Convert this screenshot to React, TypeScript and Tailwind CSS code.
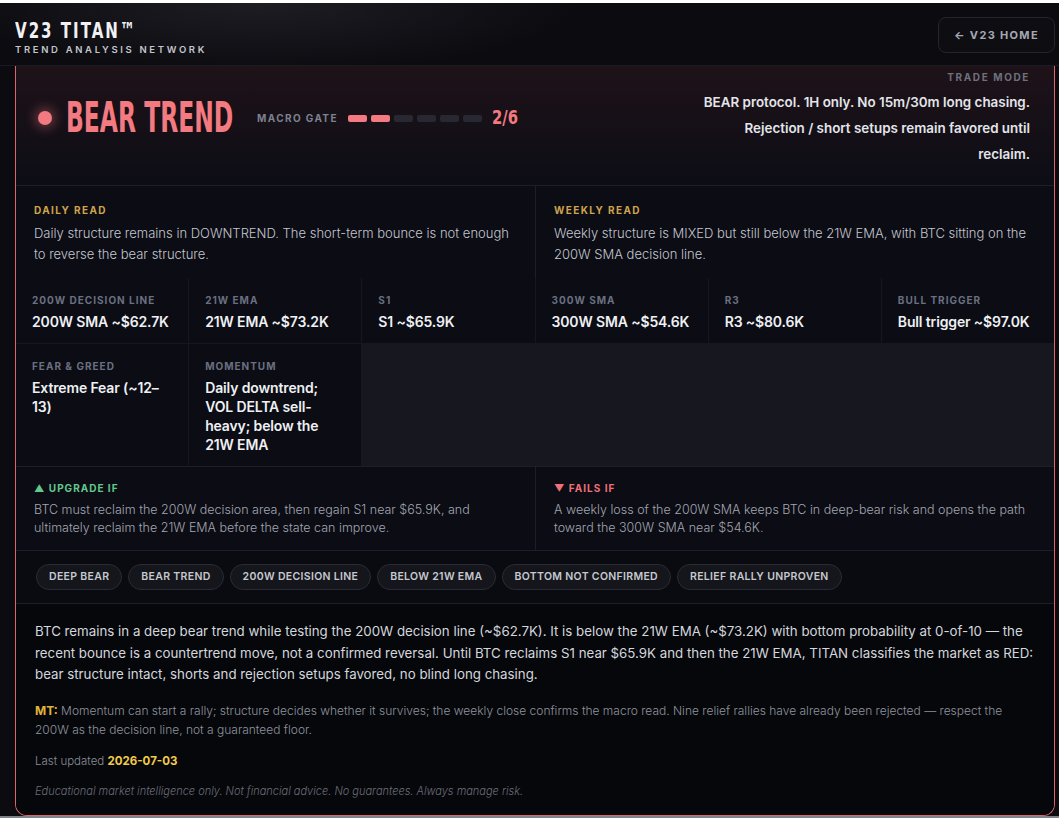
const metrics = [
  { label: "200W DECISION LINE", value: "200W SMA ~$62.7K" },
  { label: "21W EMA", value: "21W EMA ~$73.2K" },
  { label: "S1", value: "S1 ~$65.9K" },
  { label: "300W SMA", value: "300W SMA ~$54.6K" },
  { label: "R3", value: "R3 ~$80.6K" },
  { label: "BULL TRIGGER", value: "Bull trigger ~$97.0K" },
  { label: "FEAR & GREED", value: "Extreme Fear (~12–13)" },
  { label: "MOMENTUM", value: "Daily downtrend; VOL DELTA sell-heavy; below the 21W EMA" },
];

const tags = [
  "DEEP BEAR",
  "BEAR TREND",
  "200W DECISION LINE",
  "BELOW 21W EMA",
  "BOTTOM NOT CONFIRMED",
  "RELIEF RALLY UNPROVEN",
];

const cond = "font-['Liberation_Sans_Narrow','DejaVu_Sans_Condensed',sans-serif]";

const App = (): JSX.Element => {
  return (
    <div className="h-[818px] w-[1059px] overflow-hidden bg-[#0b0b10] font-['Inter',sans-serif]">
      <div className="h-[3px] bg-white" />

      {/* top bar */}
      <header className="flex h-[63px] items-start justify-between border-b border-[#1a1b22] bg-[radial-gradient(ellipse_320px_70px_at_260px_0px,#1d1d23,#0b0b10)] pl-[15px] pr-[4px]">
        <div className="pt-[17px]">
          <div className="w-[120px]">
            <span className={`inline-block origin-left [transform:scaleX(0.76)] whitespace-nowrap text-[22px] font-bold leading-[20px] tracking-[0.12em] text-[#f1f1f4] ${cond}`}>
              V23 TITAN™
            </span>
          </div>
          <div className="text-[9.5px] font-semibold leading-[12px] tracking-[0.28em] text-[#c4c6cd]">
            TREND ANALYSIS NETWORK
          </div>
        </div>
        <button className="mt-[14px] h-[36px] w-[117px] rounded-lg border border-[#24252d] bg-[#0d0d12] text-[11px] font-bold tracking-[0.12em] text-[#a6a9b3]">
          ← V23 HOME
        </button>
      </header>

      <div className="ml-[15px] mr-[4px] overflow-hidden rounded-b-[12px] border-x border-b border-[#dc6470] bg-[#0b0c14]">
        {/* hero */}
        <div className="flex justify-between border-b border-[#1d1f28] bg-linear-to-b from-[#1f1219] to-[#0c0d15]">
          <div className="box-content flex h-[42px] items-center pl-[22px] pt-[31px]">
            <span className="h-[14px] w-[14px] rounded-full bg-[#f37a80] shadow-[0_0_12px_3px_rgba(243,122,128,0.4)]" />
            <div className="ml-[14px] w-[168px]">
              <span className={`inline-block origin-left [transform:scaleX(0.62)] whitespace-nowrap text-[42px] font-bold leading-[42px] text-[#f37a80] ${cond}`}>
                BEAR TREND
              </span>
            </div>
            <span className="ml-[23px] text-[10px] font-bold tracking-[0.14em] text-[#7c8290]">MACRO GATE</span>
            <div className="ml-[10px] flex gap-[4px]">
              {[0, 1, 2, 3, 4, 5].map((i) => (
                <span key={i} className={`h-[7px] w-[19px] rounded-[2px] ${i < 2 ? "bg-[#f37a80]" : "bg-[#272832]"}`} />
              ))}
            </div>
            <div className="ml-[10px] w-[26px]">
              <span className={`inline-block origin-left [transform:scaleX(0.82)] text-[20px] font-bold leading-[20px] text-[#f37a80] ${cond}`}>2/6</span>
            </div>
          </div>
          <div className="box-content w-[332px] pb-[18px] pr-[24px] pt-[4px] text-right">
            <div className="text-[10px] font-bold leading-[14px] tracking-[0.16em] text-[#6c717e]">TRADE MODE</div>
            <p className="mt-[5px] text-[13.4px] font-semibold leading-[26px] text-[#e3e5ea]">
              BEAR protocol. 1H only. No 15m/30m long chasing. Rejection / short setups remain favored until reclaim.
            </p>
          </div>
        </div>

        {/* reads */}
        <div className="grid grid-cols-2">
          <div className="px-[18px] pb-[13px] pt-[17px]">
            <div className="text-[10px] font-bold leading-[14px] tracking-[0.14em] text-[#cfa44c]">DAILY READ</div>
            <p className="mt-[6px] text-[13px] font-light leading-[21px] text-[#c4c7cf]">
              Daily structure remains in DOWNTREND. The short-term bounce is not enough to reverse the bear structure.
            </p>
          </div>
          <div className="border-l border-[#1d1f28] px-[18px] pb-[13px] pt-[17px]">
            <div className="text-[10px] font-bold leading-[14px] tracking-[0.14em] text-[#cfa44c]">WEEKLY READ</div>
            <p className="mt-[6px] text-[13px] font-light leading-[21px] text-[#c4c7cf]">
              Weekly structure is MIXED but still below the 21W EMA, with BTC sitting on the 200W SMA decision line.
            </p>
          </div>
        </div>

        {/* metric grid */}
        <div className="grid grid-cols-6 gap-px bg-[#17181f]">
          {metrics.map((m) => (
            <div key={m.label} className="bg-[#0b0c14] px-[16px] pb-[12px] pt-[15px]">
              <div className="text-[10px] font-bold leading-[14px] tracking-[0.1em] text-[#6a7080]">{m.label}</div>
              <div className="mt-[5px] text-[14px] font-semibold leading-[19px] tracking-[-0.01em] text-[#eef0f3]">{m.value}</div>
            </div>
          ))}
        </div>

        {/* upgrade / fails */}
        <div className="grid grid-cols-2 border-t border-[#1d1f28]">
          <div className="px-[18px] pb-[13px] pt-[14px]">
            <div className="text-[10px] font-bold leading-[14px] tracking-[0.1em] text-[#62c98c]">▲ UPGRADE IF</div>
            <p className="mt-[6px] text-[12.5px] font-light leading-[18px] text-[#a2a6b0]">
              BTC must reclaim the 200W decision area, then regain S1 near $65.9K, and ultimately reclaim the 21W EMA before the state can improve.
            </p>
          </div>
          <div className="border-l border-[#1d1f28] px-[18px] pb-[13px] pt-[14px]">
            <div className="text-[10px] font-bold leading-[14px] tracking-[0.1em] text-[#f0707a]">▼ FAILS IF</div>
            <p className="mt-[6px] text-[12.5px] font-light leading-[18px] text-[#a2a6b0]">
              A weekly loss of the 200W SMA keeps BTC in deep-bear risk and opens the path toward the 300W SMA near $54.6K.
            </p>
          </div>
        </div>

        {/* tags */}
        <div className="flex gap-[6px] border-t border-[#1d1f28] bg-[#0a0b11] px-[20px] py-[13px]">
          {tags.map((t) => (
            <span
              key={t}
              className="flex h-[26px] items-center rounded-full border border-[#2a2b34] bg-[#15161c] px-[12px] text-[10.5px] font-semibold tracking-[0.03em] text-[#c6c9d0]"
            >
              {t}
            </span>
          ))}
        </div>

        {/* summary */}
        <div className="border-t border-[#1d1f28] bg-[#06070b] pb-[16px] pl-[19px] pr-[9px] pt-[17px]">
          <p className="text-[13.3px] leading-[21.5px] text-[#d3d6dc]">
            BTC remains in a deep bear trend while testing the 200W decision line (~$62.7K). It is below the 21W EMA
            (~$73.2K) with bottom probability at 0-of-10 — the recent bounce is a countertrend move, not a confirmed
            reversal. Until BTC reclaims S1 near $65.9K and then the 21W EMA, TITAN classifies the market as RED: bear
            structure intact, shorts and rejection setups favored, no blind long chasing.
          </p>
          <p className="mt-[15px] pr-[25px] text-[12px] font-light leading-[19px] text-[#8f939d]">
            <span className="font-bold text-[#e2b33c]">MT:</span> Momentum can start a rally; structure decides whether
            it survives; the weekly close confirms the macro read. Nine relief rallies have already been rejected —
            respect the 200W as the decision line, not a guaranteed floor.
          </p>
          <p className="mt-[14px] text-[11.5px] font-light leading-[16px] text-[#8a8e98]">
            Last updated <span className="font-bold text-[#f2c94c]">2026-07-03</span>
          </p>
          <p className="mt-[14px] text-[11px] font-light italic leading-[16px] text-[#6a6e78]">
            Educational market intelligence only. Not financial advice. No guarantees. Always manage risk.
          </p>
        </div>
      </div>
      <div className="h-[3px] bg-[#7e8186]" />
    </div>
  );
};

export default App;
